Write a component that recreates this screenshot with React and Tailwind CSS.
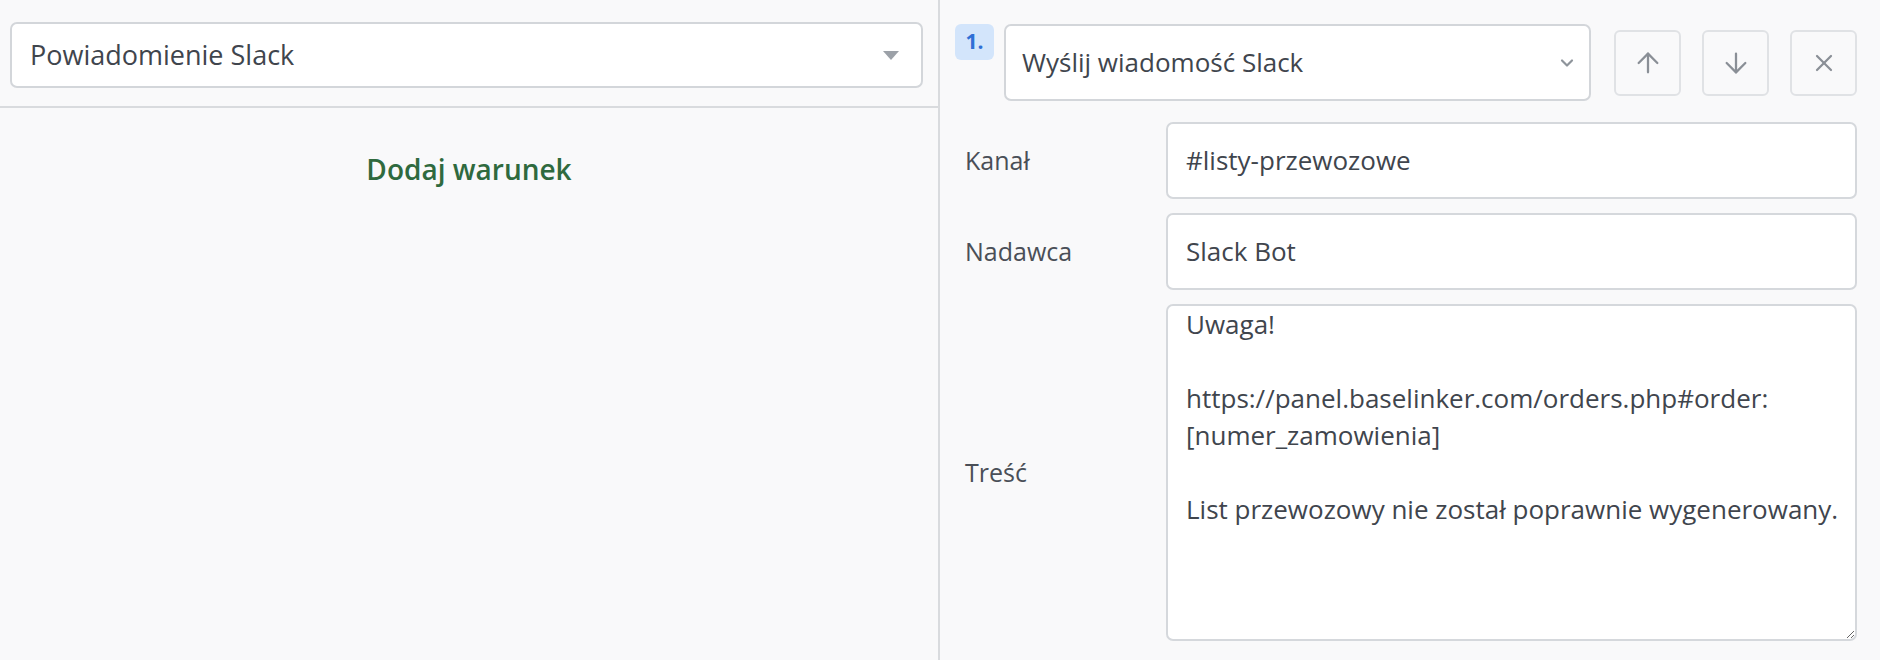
import { ArrowUp, ArrowDown, X, ChevronDown } from "lucide-react";

const font = { fontFamily: '"Open Sans", "Noto Sans", sans-serif' };

function Field({ label, value }) {
  return (
    <div className="flex items-center">
      <div className="w-[211px] pl-[10px] text-[25px] text-[#4a4f57]">{label}</div>
      <div className="flex-1 h-[77px] flex items-center px-[18px] bg-white border-2 border-[#d5d8dc] rounded-[7px] text-[26px] text-[#40454d]">
        {value}
      </div>
    </div>
  );
}

export default function App() {
  const message =
    "Uwaga!\n\nhttps://panel.baselinker.com/orders.php#order:[numer_zamowienia]\n\nList przewozowy nie został poprawnie wygenerowany.";

  return (
    <div className="w-[1880px] h-[660px] flex bg-[#f9f9fa] overflow-hidden" style={font}>
      {/* Left: trigger */}
      <div className="w-[941px] border-r-2 border-[#d9dbde] flex flex-col">
        <div className="pt-[22px] pl-[10px] pr-[15px] pb-[18px] border-b-2 border-[#d9dbde]">
          <div className="h-[66px] bg-white border-2 border-[#d3d6da] rounded-[7px] flex items-center justify-between pl-[18px] pr-[22px]">
            <span className="text-[27px] text-[#40454d]">Powiadomienie Slack</span>
            <span className="w-0 h-0 border-l-[8px] border-r-[8px] border-t-[9px] border-l-transparent border-r-transparent border-t-[#9ca1a8]" />
          </div>
        </div>
        <div className="flex justify-center pt-[40px]">
          <span className="text-[28px] font-semibold text-[#2f6a3e]">Dodaj warunek</span>
        </div>
      </div>

      {/* Right: action */}
      <div className="flex-1 pl-[15px] pr-[23px] pt-[24px] flex flex-col">
        <div className="flex items-start">
          <div className="w-[39px] h-[36px] rounded-[6px] bg-[#d3e5fb] text-[#2f6fd6] font-bold text-[21px] flex items-center justify-center">
            1.
          </div>
          <div className="ml-[10px] w-[587px] h-[77px] bg-white border-2 border-[#d3d6da] rounded-[7px] flex items-center justify-between pl-[16px] pr-[12px]">
            <span className="text-[26px] text-[#40454d]">Wyślij wiadomość Slack</span>
            <ChevronDown size={20} strokeWidth={2.6} className="text-[#8e949b]" />
          </div>
          <div className="ml-[23px] mt-[6px] flex gap-[21px]">
            <button className="w-[67px] h-[66px] rounded-[6px] border-2 border-[#e0e2e5] bg-[#f9f9fa] flex items-center justify-center text-[#8a8f96]">
              <ArrowUp size={32} strokeWidth={1.7} />
            </button>
            <button className="w-[67px] h-[66px] rounded-[6px] border-2 border-[#e0e2e5] bg-[#f9f9fa] flex items-center justify-center text-[#8a8f96]">
              <ArrowDown size={32} strokeWidth={1.7} />
            </button>
            <button className="w-[67px] h-[66px] rounded-[6px] border-2 border-[#e0e2e5] bg-[#f9f9fa] flex items-center justify-center text-[#8a8f96]">
              <X size={28} strokeWidth={1.9} />
            </button>
          </div>
        </div>

        <div className="mt-[21px] flex flex-col gap-[14px]">
          <Field label="Kanał" value="#listy-przewozowe" />
          <Field label="Nadawca" value="Slack Bot" />
          <div className="flex items-center">
            <div className="w-[211px] pl-[10px] text-[25px] text-[#4a4f57]">Treść</div>
            <textarea
              readOnly
              defaultValue={message}
              className="flex-1 h-[337px] bg-white border-2 border-[#d5d8dc] rounded-[7px] pl-[18px] pr-[12px] pt-0 text-[26px] leading-[37px] text-[#40454d] outline-none"
              style={font}
            />
          </div>
        </div>
      </div>
    </div>
  );
}
